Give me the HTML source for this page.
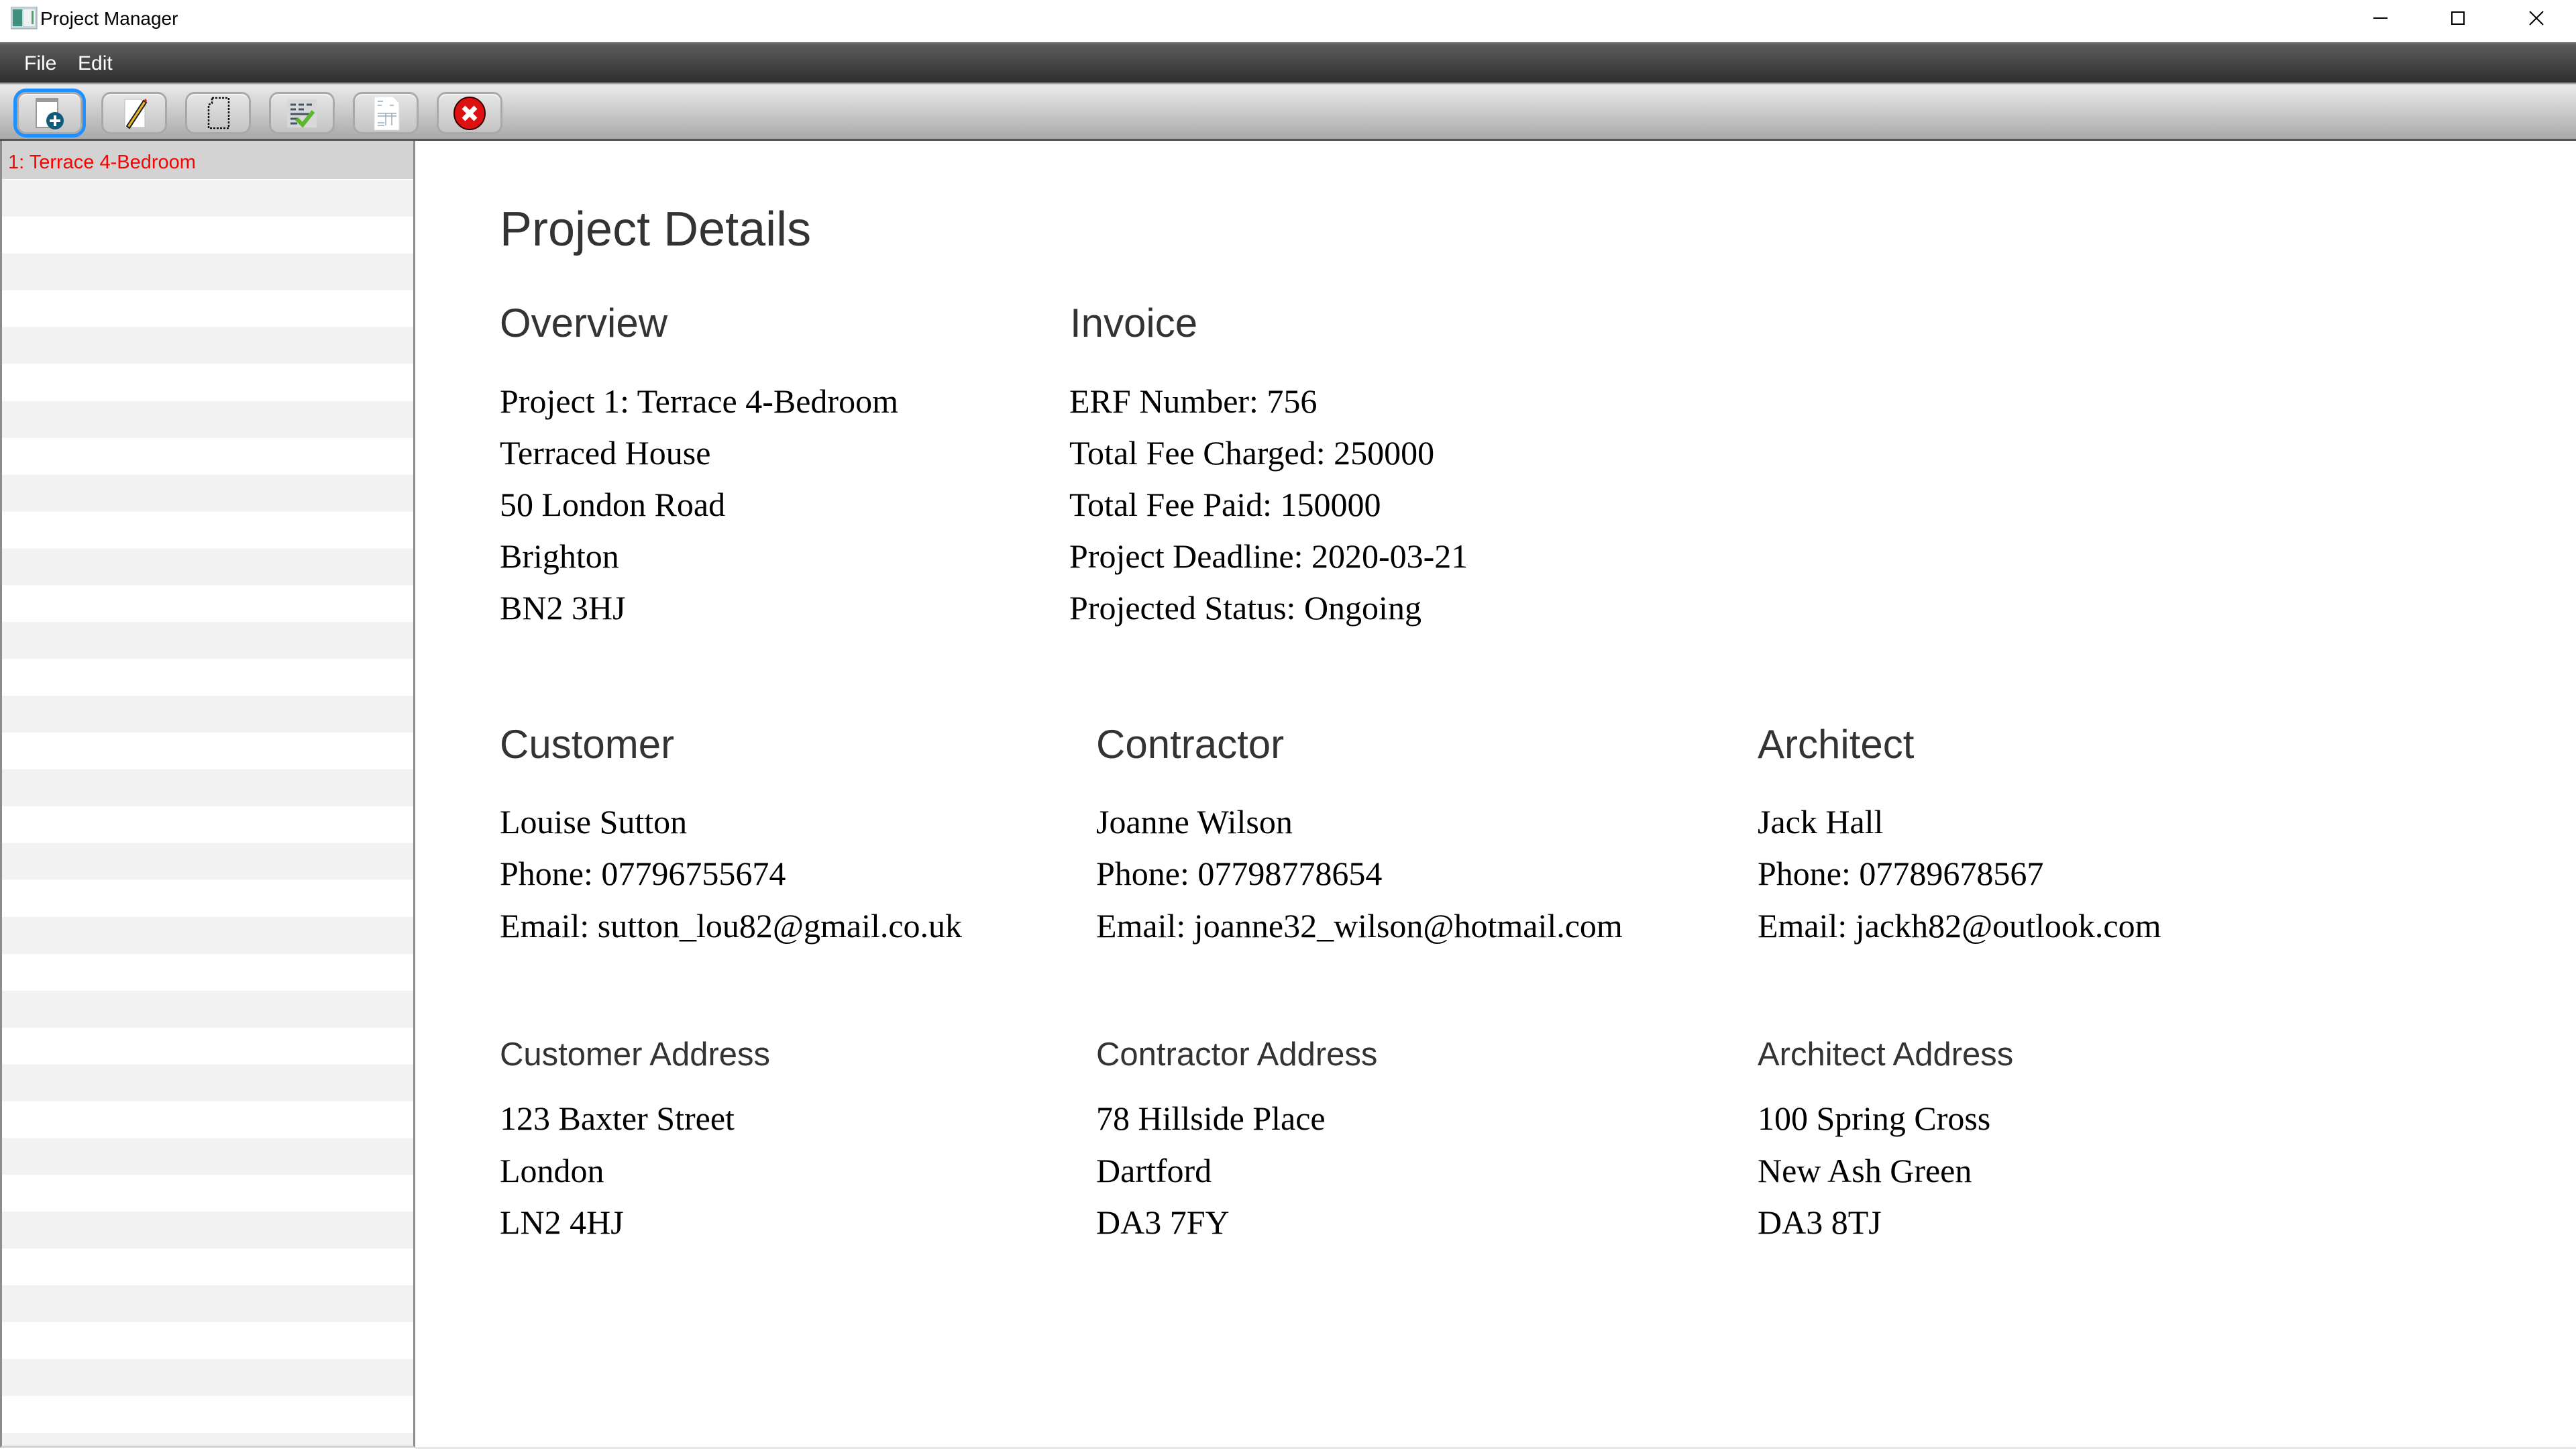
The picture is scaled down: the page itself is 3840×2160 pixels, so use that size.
<!DOCTYPE html>
<html><head><meta charset="utf-8"><style>
*{margin:0;padding:0;box-sizing:border-box}
body{width:3840px;height:2160px;position:relative;background:#fff;overflow:hidden;font-family:"Liberation Sans",sans-serif}
.a{position:absolute;white-space:nowrap;line-height:1}
.h{font-family:"Liberation Sans",sans-serif;color:#333}
.s{font-family:"Liberation Serif",serif;color:#000;font-size:50px}
.btn{position:absolute;top:137px;width:98px;height:63px;border:3px solid #a9a9a9;border-radius:14px;background:linear-gradient(#e6e6e6,#c4c4c4);box-shadow:inset 0 2px 0 #f4f4f4}
.btn svg{position:absolute;left:50%;top:50%;transform:translate(-50%,-50%)}
</style></head><body>
<div class="a" style="left:0;top:0;width:3840px;height:63px;background:#fff"></div>
<svg class="a" style="left:16px;top:10px" width="40" height="34" viewBox="0 0 40 34"><rect x="0" y="0" width="39" height="33" fill="#c9d3da" stroke="#8a9aa5"/><rect x="3" y="4" width="14" height="25" fill="#3e8f7e"/><rect x="19" y="4" width="17" height="25" fill="#eef2f2"/><rect x="31" y="6" width="3" height="20" fill="#4aa36d"/></svg>
<div class="a" style="left:60px;top:14px;font-size:28px;color:#000">Project Manager</div>
<div class="a" style="left:3538px;top:26px;width:21px;height:2px;background:#000"></div>
<div class="a" style="left:3654px;top:17px;width:20px;height:20px;border:2px solid #000"></div>
<svg class="a" style="left:3770px;top:16px" width="22" height="22"><path d="M1 1L21 21M21 1L1 21" stroke="#000" stroke-width="2"/></svg>
<div class="a" style="left:0;top:63px;width:3840px;height:60px;background:linear-gradient(#6a6a6a 0,#6a6a6a 3px,#5c5c5c 3px,#2f2f2f 100%)"></div>
<div class="a" style="left:36px;top:80px;font-size:30px;color:#fff">File</div>
<div class="a" style="left:116px;top:80px;font-size:30px;color:#fff">Edit</div>
<div class="a" style="left:0;top:123px;width:3840px;height:87px;background:linear-gradient(#9a9a9a 0,#9a9a9a 2px,#ebebeb 3px,#a9a9a9 84px,#555 84px,#555 87px)"></div>
<div class="btn" style="left:25px;box-shadow:0 0 0 5px #1e90ff,inset 0 2px 0 #f4f4f4"><svg width="48" height="50" viewBox="0 0 48 50"><rect x="3" y="2" width="34" height="45" fill="#9a9a9a"/><rect x="5" y="8" width="30" height="37" fill="#fff"/><circle cx="32" cy="36" r="13" fill="#0e5c7a"/><path d="M32 28v16M24 36h16" stroke="#fff" stroke-width="4"/></svg></div>
<div class="btn" style="left:151px"><svg width="48" height="50" viewBox="0 0 48 50"><path d="M10 4h24l6 6v36H10z" fill="#fff" stroke="#bbb"/><path d="M13 44L38 6l4 3L17 47z" fill="#e8b923" stroke="#222" stroke-width="2"/><path d="M38 6l4 3 1-3-2-3z" fill="#c22"/></svg></div>
<div class="btn" style="left:276px"><svg width="40" height="50" viewBox="0 0 40 50"><path d="M11 2h25v45H6V12l5-2z" fill="none" stroke="#111" stroke-width="2.5" stroke-dasharray="3 2"/></svg></div>
<div class="btn" style="left:401px"><svg width="50" height="50" viewBox="0 0 50 50"><rect x="3" y="4" width="44" height="42" fill="#d8d8d8"/><g stroke="#456" stroke-width="3"><path d="M8 12h8M20 12h8M32 12h8M8 19h8M20 19h8M8 26h30M8 33h12M8 40h10"/></g><path d="M17 33l9 9 16-20" stroke="#5cb82a" stroke-width="6" fill="none"/></svg></div>
<div class="btn" style="left:526px"><svg width="44" height="52" viewBox="0 0 44 52"><path d="M5 1h28l9 9v41H5z" fill="#fff" stroke="#ddd"/><g stroke="#9ab" stroke-width="1.5"><path d="M10 8h8M10 14h6M28 14h6M10 26h28M10 30h28M22 26v18M31 26v18M10 40h10M10 44h10"/></g></svg></div>
<div class="btn" style="left:651px"><svg width="50" height="52" viewBox="0 0 50 52"><ellipse cx="25" cy="26" rx="23" ry="24" fill="#d11" stroke="#300" stroke-width="2"/><path d="M16 17l18 18M34 17L16 35" stroke="#fff" stroke-width="7"/></svg></div>
<div class="a" style="left:0;top:210px;width:619px;height:1948px;border-left:3px solid #8c8c8c;border-right:3px solid #8c8c8c;border-bottom:3px solid #d0d0d0;background:repeating-linear-gradient(#fff 0,#fff 54.94px,#f2f2f2 54.94px,#f2f2f2 109.88px);background-position:0 3px"></div>
<div class="a" style="left:3px;top:210px;width:613px;height:57px;background:#d3d3d3"></div>
<div class="a" style="left:12px;top:228px;font-size:29px;color:#f00">1: Terrace 4-Bedroom</div>
<div class="a h" style="left:745px;top:306px;font-size:72px">Project Details</div>
<div class="a h" style="left:745px;top:452px;font-size:60px">Overview</div>
<div class="a h" style="left:1595px;top:452px;font-size:60px">Invoice</div>
<div class="a s" style="left:745px;top:573px">Project 1: Terrace 4-Bedroom</div>
<div class="a s" style="left:745px;top:650px">Terraced House</div>
<div class="a s" style="left:745px;top:727px">50 London Road</div>
<div class="a s" style="left:745px;top:804px">Brighton</div>
<div class="a s" style="left:745px;top:881px">BN2 3HJ</div>
<div class="a s" style="left:1594px;top:573px">ERF Number: 756</div>
<div class="a s" style="left:1594px;top:650px">Total Fee Charged: 250000</div>
<div class="a s" style="left:1594px;top:727px">Total Fee Paid: 150000</div>
<div class="a s" style="left:1594px;top:804px">Project Deadline: 2020-03-21</div>
<div class="a s" style="left:1594px;top:881px">Projected Status: Ongoing</div>
<div class="a h" style="left:745px;top:1080px;font-size:60px">Customer</div>
<div class="a h" style="left:1634px;top:1080px;font-size:60px">Contractor</div>
<div class="a h" style="left:2620px;top:1080px;font-size:60px">Architect</div>
<div class="a s" style="left:745px;top:1200px">Louise Sutton</div>
<div class="a s" style="left:745px;top:1277px">Phone: 07796755674</div>
<div class="a s" style="left:745px;top:1355px">Email: sutton_lou82@gmail.co.uk</div>
<div class="a s" style="left:1634px;top:1200px">Joanne Wilson</div>
<div class="a s" style="left:1634px;top:1277px">Phone: 07798778654</div>
<div class="a s" style="left:1634px;top:1355px">Email: joanne32_wilson@hotmail.com</div>
<div class="a s" style="left:2620px;top:1200px">Jack Hall</div>
<div class="a s" style="left:2620px;top:1277px">Phone: 07789678567</div>
<div class="a s" style="left:2620px;top:1355px">Email: jackh82@outlook.com</div>
<div class="a h" style="left:745px;top:1548px;font-size:49px">Customer Address</div>
<div class="a h" style="left:1634px;top:1548px;font-size:49px">Contractor Address</div>
<div class="a h" style="left:2620px;top:1548px;font-size:49px">Architect Address</div>
<div class="a s" style="left:745px;top:1642px">123 Baxter Street</div>
<div class="a s" style="left:745px;top:1720px">London</div>
<div class="a s" style="left:745px;top:1797px">LN2 4HJ</div>
<div class="a s" style="left:1634px;top:1642px">78 Hillside Place</div>
<div class="a s" style="left:1634px;top:1720px">Dartford</div>
<div class="a s" style="left:1634px;top:1797px">DA3 7FY</div>
<div class="a s" style="left:2620px;top:1642px">100 Spring Cross</div>
<div class="a s" style="left:2620px;top:1720px">New Ash Green</div>
<div class="a s" style="left:2620px;top:1797px">DA3 8TJ</div>
<div class="a" style="left:619px;top:2157px;width:3221px;height:3px;background:#e6e6e6"></div>
</body></html>
